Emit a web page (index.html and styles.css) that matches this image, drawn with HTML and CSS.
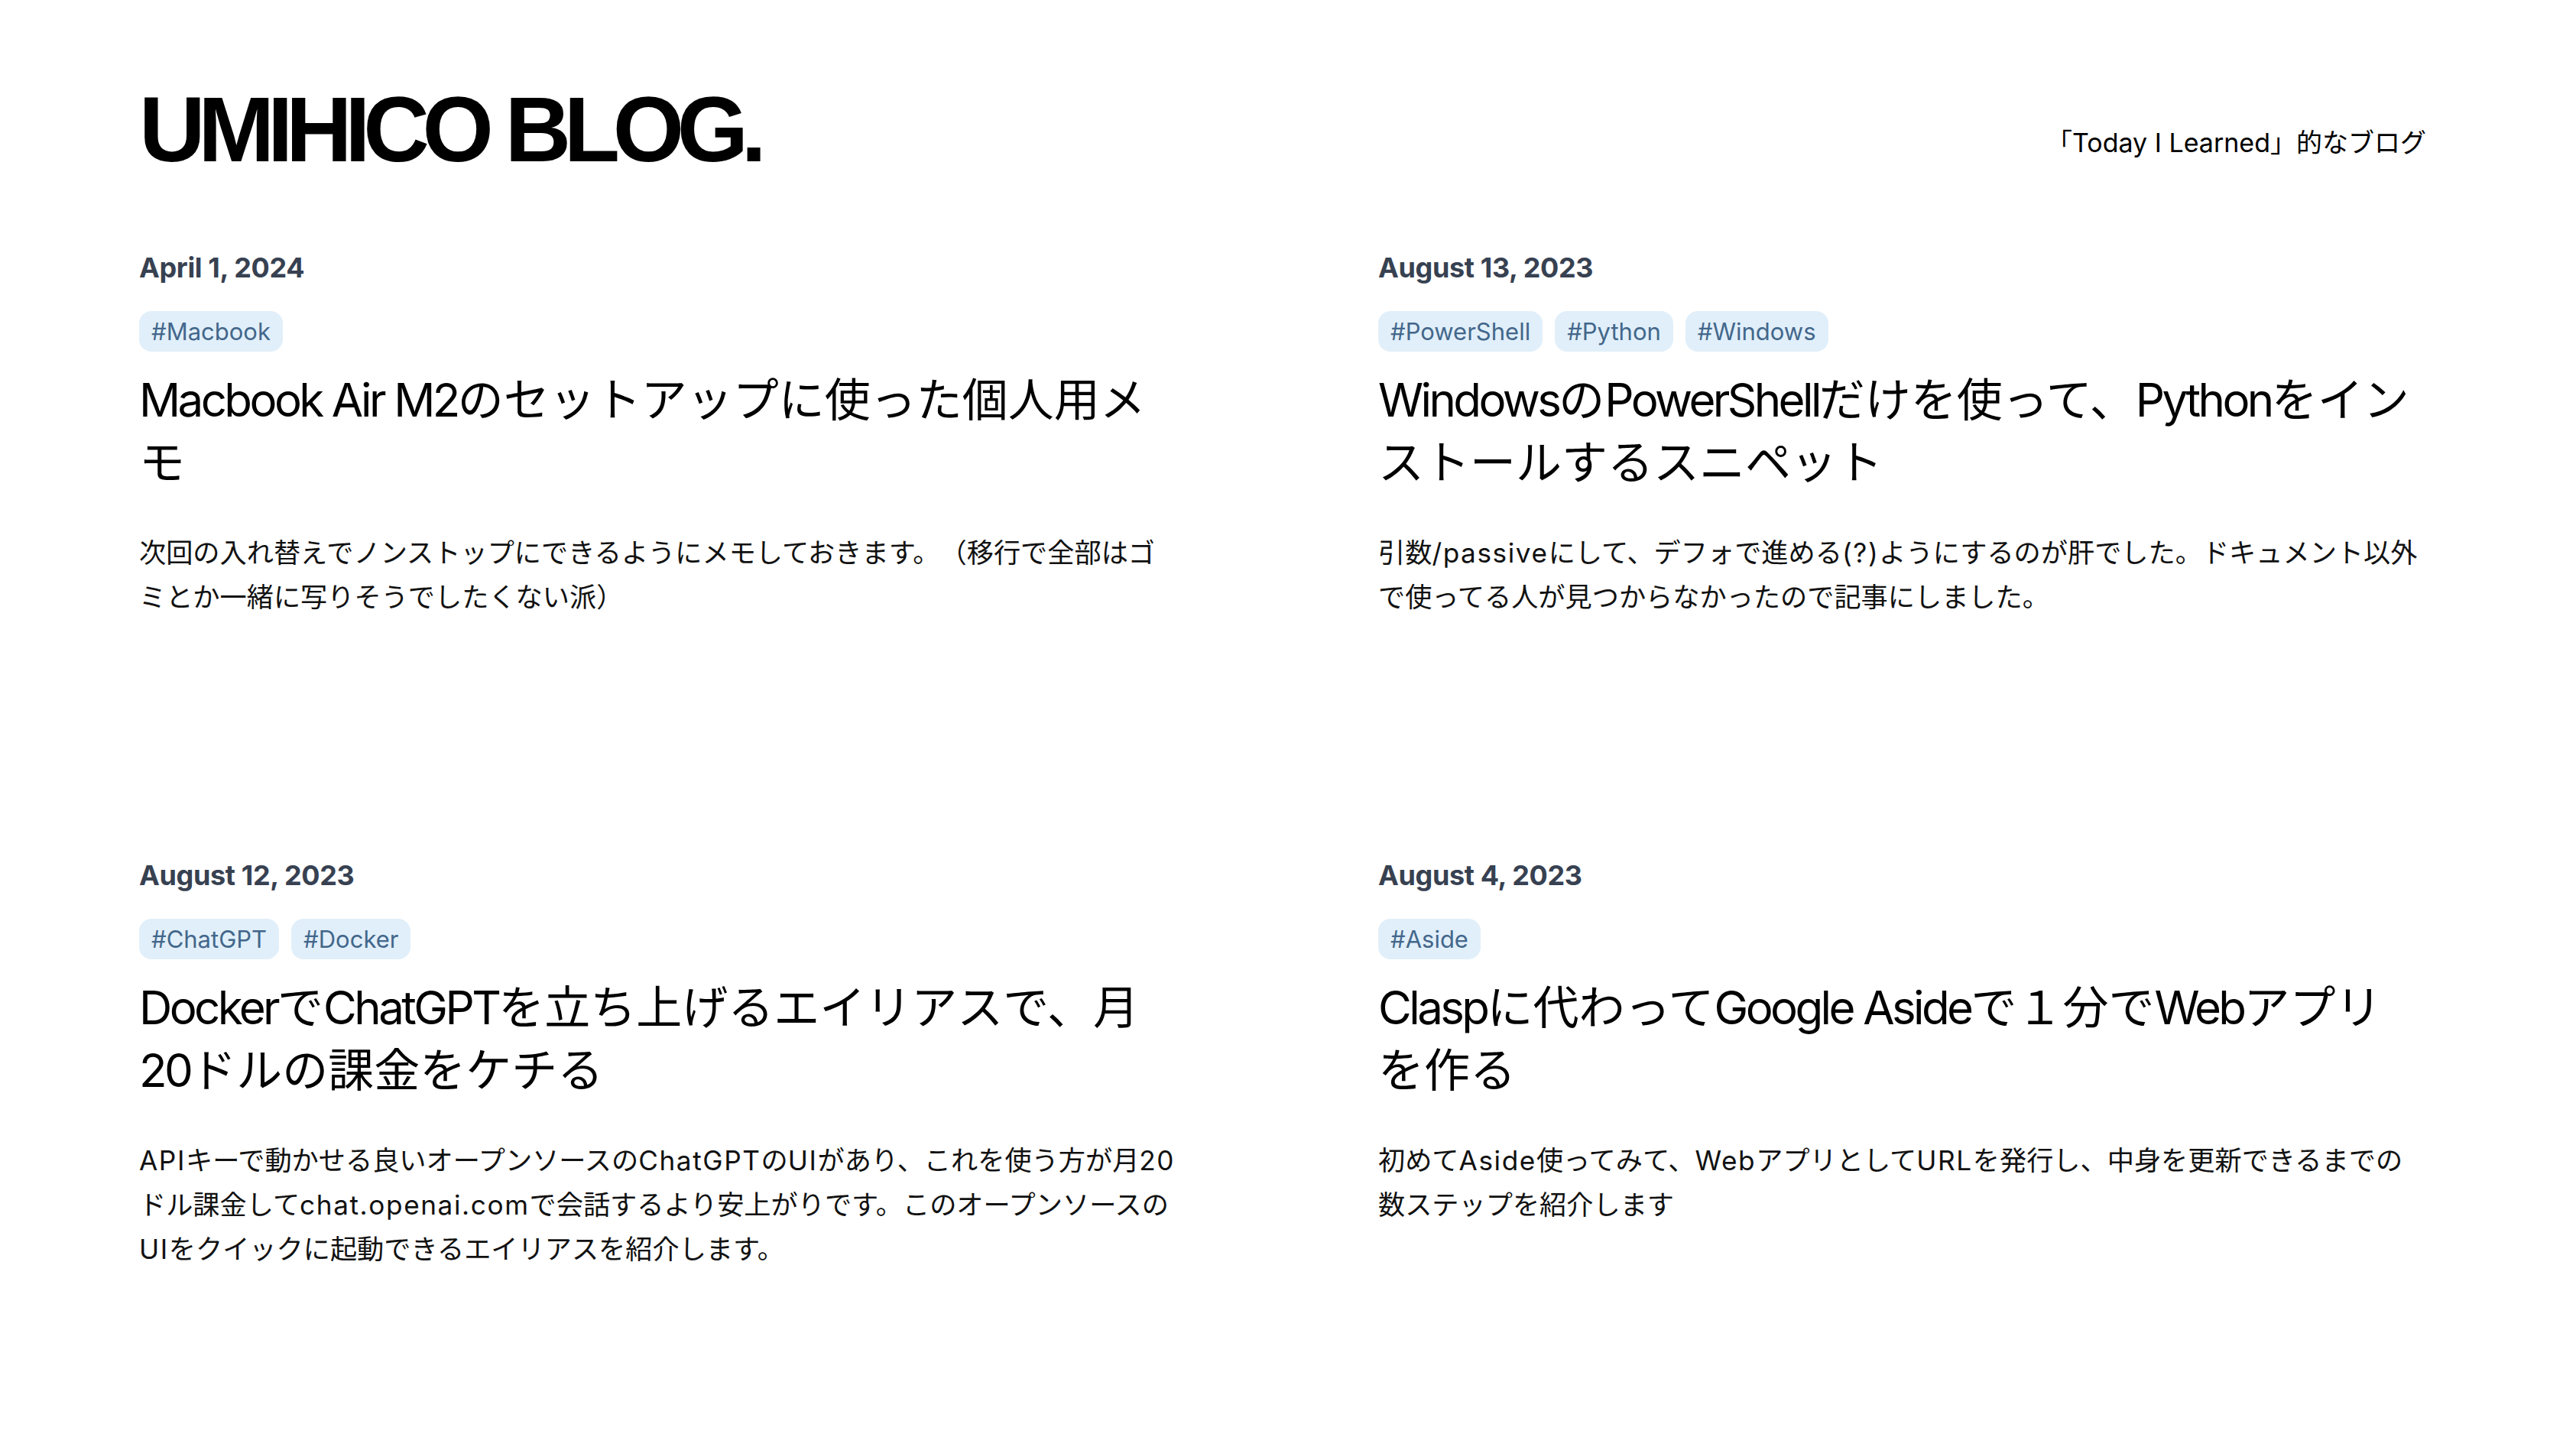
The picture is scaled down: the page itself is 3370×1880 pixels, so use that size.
FILE: index.html
```html
<!DOCTYPE html>
<html lang="ja">
<head>
<meta charset="utf-8">
<title>UMIHICO BLOG.</title>
<link rel="stylesheet" href="styles.css">
</head>
<body>
<div class="page">
  <header class="site-header">
    <h1 class="logo">UMIHICO BLOG.</h1>
    <p class="tagline">「Today I Learned」的なブログ</p>
  </header>
  <main class="posts">
    <article class="post">
      <time class="date">April 1, 2024</time>
      <ul class="tags"><li class="tag">#Macbook</li></ul>
      <h2 class="post-title"><span class="en">Macbook Air M2</span>のセットアップに使った個人用メモ</h2>
      <p class="excerpt">次回の入れ替えでノンストップにできるようにメモしておきます。（移行で全部はゴミとか一緒に写りそうでしたくない派）</p>
    </article>
    <article class="post">
      <time class="date">August 13, 2023</time>
      <ul class="tags"><li class="tag">#PowerShell</li><li class="tag">#Python</li><li class="tag">#Windows</li></ul>
      <h2 class="post-title"><span class="en">Windows</span>の<span class="en">PowerShell</span>だけを使って、<span class="en">Python</span>をインストールするスニペット</h2>
      <p class="excerpt">引数<span class="en">/passive</span>にして、デフォで進める<span class="en">(?)</span>ようにするのが肝でした。ドキュメント以外で使ってる人が見つからなかったので記事にしました。</p>
    </article>
    <article class="post">
      <time class="date">August 12, 2023</time>
      <ul class="tags"><li class="tag">#ChatGPT</li><li class="tag">#Docker</li></ul>
      <h2 class="post-title"><span class="en">Docker</span>で<span class="en">ChatGPT</span>を立ち上げるエイリアスで、月<span class="en">20</span>ドルの課金をケチる</h2>
      <p class="excerpt"><span class="en">API</span>キーで動かせる良いオープンソースの<span class="en">ChatGPT</span>の<span class="en">UI</span>があり、これを使う方が月<span class="en">20</span>ドル課金して<span class="en">chat.openai.com</span>で会話するより安上がりです。このオープンソースの<span class="en">UI</span>をクイックに起動できるエイリアスを紹介します。</p>
    </article>
    <article class="post">
      <time class="date">August 4, 2023</time>
      <ul class="tags"><li class="tag">#Aside</li></ul>
      <h2 class="post-title"><span class="en">Clasp</span>に代わって<span class="en">Google Aside</span>で１分で<span class="en">Web</span>アプリを作る</h2>
      <p class="excerpt">初めて<span class="en">Aside</span>使ってみて、<span class="en">Web</span>アプリとして<span class="en">URL</span>を発行し、中身を更新できるまでの数ステップを紹介します</p>
    </article>
  </main>
</div>
</body>
</html>
```
FILE: styles.css
```css
html, body {
  margin: 0;
  background: #ffffff;
}
body {
  font-family: "Inter", "Noto Sans CJK JP", sans-serif;
  color: #000000;
  text-spacing-trim: space-all;
}
.page {
  width: 2992px;
  margin-left: 182px;
  padding-top: 109px;
}
.site-header {
  display: flex;
  justify-content: space-between;
  align-items: center;
  height: 120px;
}
.logo {
  margin: 0;
  font-family: "Liberation Sans", Arial, sans-serif;
  font-weight: 700;
  font-size: 120px;
  line-height: 1;
  letter-spacing: -0.078em;
}
.tagline {
  margin: 34px 0 0;
  font-size: 34px;
  line-height: 1.5;
}
.posts {
  display: grid;
  grid-template-columns: repeat(2, 1362px);
  column-gap: 259px;
  row-gap: 308px;
  margin-top: 94px;
}
.post {
  display: flex;
  flex-direction: column;
  align-items: flex-start;
}
.date {
  font-size: 36px;
  font-weight: 700;
  line-height: 54px;
  letter-spacing: -0.01em;
  color: #374151;
}
.tags {
  display: flex;
  gap: 16px;
  list-style: none;
  margin: 30px 0 0;
  padding: 0;
}
.tag {
  font-size: 31px;
  line-height: 45px;
  padding: 4px 16px;
  border-radius: 16px;
  background: #e1effa;
  color: #43678b;
}
.post-title {
  margin: 22px 0 0;
  font-size: 60px;
  font-weight: 400;
  line-height: 82px;
}
.post-title .en {
  letter-spacing: -0.06em;
}
.excerpt {
  margin: 48px 0 0;
  font-size: 35.2px;
  line-height: 58px;
  color: #111111;
}
.excerpt .en {
  letter-spacing: 0.045em;
}
```
